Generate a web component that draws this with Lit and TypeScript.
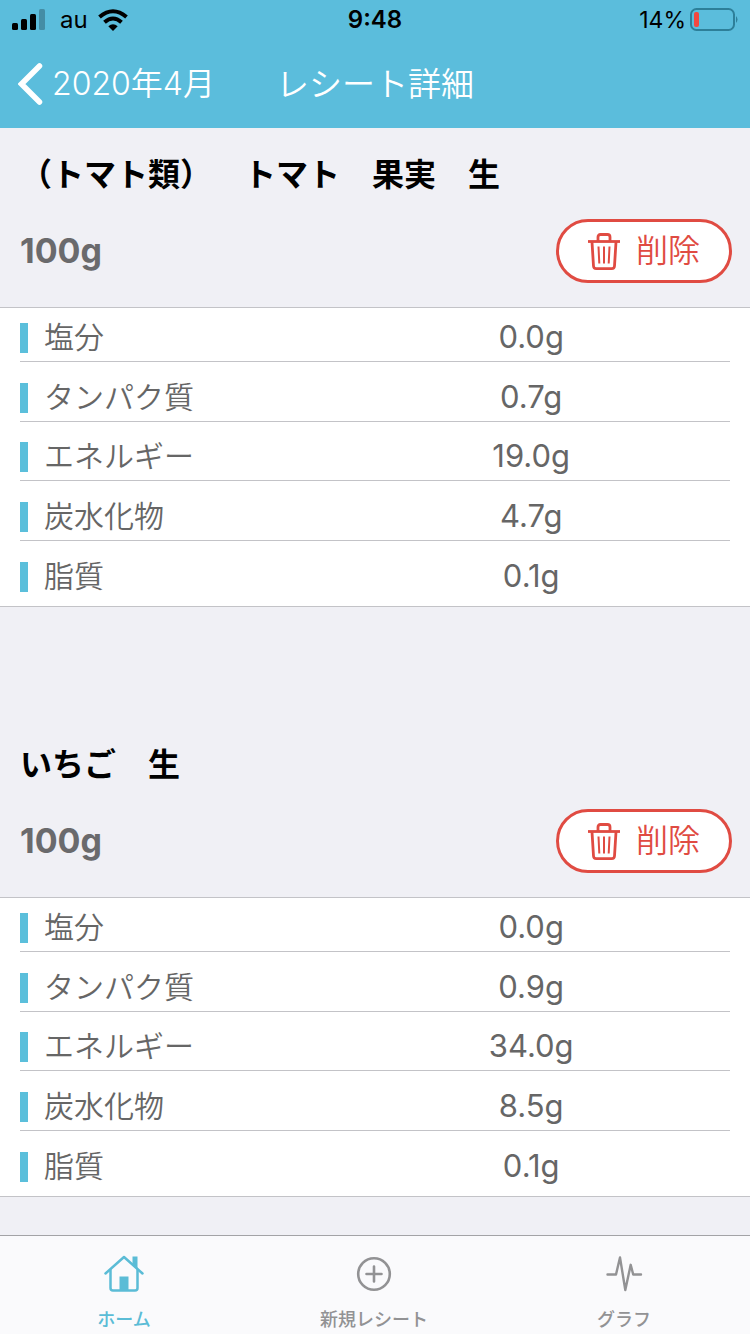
import { LitElement, html, svg, css } from "lit";
import { customElement, property, state } from "lit/decorators.js";
import { classMap } from "lit/directives/class-map.js";

interface Nutrient {
  label: string;
  value: string;
}

interface Food {
  name: string;
  amount: string;
  nutrients: Nutrient[];
}

const nutrients = (...values: string[]): Nutrient[] =>
  ["塩分", "タンパク質", "エネルギー", "炭水化物", "脂質"].map((label, i) => ({ label, value: values[i] }));

const FOODS: Food[] = [
  { name: "（トマト類）　トマト　果実　生", amount: "100g", nutrients: nutrients("0.0g", "0.7g", "19.0g", "4.7g", "0.1g") },
  { name: "いちご　生", amount: "100g", nutrients: nutrients("0.0g", "0.9g", "34.0g", "8.5g", "0.1g") },
];

const TABS = [
  {
    id: "home",
    label: "ホーム",
    icon: svg`<path d="M1.500 18.500 20 2l18.500 16.500" stroke-width="2.500"/><path d="M6.500 15v18q0 2.500 2.500 2.500h22q2.500 0 2.500-2.500V15" stroke-width="2.500"/><path d="M28.500 1.500H33.500v13l-5-4.500Z" fill="currentColor" stroke="none"/><path d="M15.500 21.500h9V36h-9Z" fill="currentColor" stroke="none"/>`,
  },
  {
    id: "new",
    label: "新規レシート",
    icon: svg`<circle cx="20" cy="19" r="15.800" stroke-width="2.600"/><path d="M20 11.500v15M12.500 19h15" stroke-width="2.600"/>`,
  },
  {
    id: "graph",
    label: "グラフ",
    icon: svg`<path d="M3.500 19.500h8.500L16 2.500l5.300 32.500 5.400-25.200 2.500 9.700h7.800" stroke-width="2.400"/>`,
  },
];

@customElement("status-bar")
class StatusBar extends LitElement {
  static styles = css`
    :host {
      display: grid;
      grid-template-columns: 1fr auto 1fr;
      align-items: center;
      height: 40px;
      padding: 0 12px;
      color: #000;
      font-size: 23px;
      line-height: 28px;
    }
    .side { display: flex; align-items: center; }
    .signal { margin-right: 15px; }
    .carrier { margin-right: 10px; font-size: 24px; }
    .time { font-weight: 600; font-size: 24px; }
    .power { justify-content: flex-end; gap: 4px; }
    svg { display: block; flex: none; }
  `;

  render() {
    return html`
      <div class="side">
        <svg class="signal" width="33" height="22" viewBox="0 0 33 22" aria-hidden="true">
          <rect x="0" y="14" width="6" height="7" rx="1.500" />
          <rect x="9" y="10" width="6" height="11" rx="1.500" />
          <rect x="18" y="5" width="6" height="16" rx="1.500" />
          <rect x="27" y="0" width="6" height="21" rx="1.500" opacity=".25" />
        </svg>
        <span class="carrier">au</span>
        <svg width="30" height="22" viewBox="0 0 30 22" aria-hidden="true">
          <g fill="none" stroke="#000" stroke-width="4">
            <path d="M1.500 8Q15-3.500 28.500 8" />
            <path d="M6.500 13.200q8.500-7.400 17 0" />
          </g>
          <path d="M15 22l-4.700-4.800q4.700-3.700 9.400 0Z" />
        </svg>
      </div>
      <time class="time">9:48</time>
      <div class="side power">
        <span>14%</span>
        <svg width="48" height="24" viewBox="0 0 48 24" aria-hidden="true">
          <rect x="1" y="1" width="43" height="21" rx="5.500" fill="none" stroke="#2d7f99" stroke-width="2" />
          <path d="M46 8q3 3.500 0 7Z" fill="#2d7f99" />
          <rect x="4" y="4" width="5" height="15" rx="2" fill="#f4473f" />
        </svg>
      </div>
    `;
  }
}

@customElement("food-section")
class FoodSection extends LitElement {
  @property({ attribute: false }) food!: Food;

  static styles = css`
    :host { display: block; }
    .head {
      display: flex;
      flex-direction: column;
      gap: 20px;
      padding: 22px 18px 24px 20px;
    }
    .name {
      margin: 0;
      color: #000;
      font-size: 32px;
      line-height: 49px;
      font-weight: 600;
      text-spacing-trim: space-all;
    }
    .line { display: flex; align-items: center; justify-content: space-between; }
    .amount { color: #6a6a6c; font-size: 34px; line-height: 40px; font-weight: 700; }
    .delete {
      display: flex;
      align-items: center;
      justify-content: center;
      gap: 16px;
      width: 176px;
      height: 64px;
      padding: 0;
      border: 3px solid #e04b42;
      border-radius: 32px;
      background: #fff;
      color: #e04b42;
      font: inherit;
      font-size: 32px;
      line-height: 40px;
      font-weight: 350;
      cursor: pointer;
    }
    .delete svg { display: block; fill: none; stroke: currentColor; }
    .panel {
      padding: 0 20px;
      background: #fff;
      border-top: 1px solid #c3c3c7;
      border-bottom: 1px solid #c3c3c7;
    }
    .facts {
      width: 100%;
      border-collapse: separate;
      border-spacing: 0;
      table-layout: fixed;
      color: #666;
      font-size: 30px;
      line-height: 28px;
    }
    .label, .value {
      height: 30px;
      padding: 21px 0 8px;
      border-bottom: 1px solid #c3c3c7;
      font-weight: 350;
      vertical-align: top;
      white-space: nowrap;
    }
    .label { width: 44%; text-align: left; }
    .value { text-align: center; font-size: 31px; font-weight: 400; }
    .row:first-child > * { padding-top: 15px; }
    .row:nth-child(3) > * { padding-top: 20px; }
    .row:last-child > * { padding-bottom: 14px; border-bottom: 0; }
    .mark { display: flex; gap: 16px; }
    .mark::before { content: ""; width: 8px; height: 30px; background: #5bbfdb; }
  `;

  render() {
    const { name, amount, nutrients } = this.food;
    return html`
      <header class="head">
        <h2 class="name">${name}</h2>
        <div class="line">
          <span class="amount">${amount}</span>
          <button class="delete" type="button">
            <svg width="32" height="38" viewBox="0 0 32 38" stroke-width="2.800" aria-hidden="true">
              <path d="M0 9.500h32" />
              <path d="M10 9V5q0-2.500 2.500-2.500h7Q22 2.500 22 5v4" />
              <path d="M4 10l1.500 24q.2 2.600 2.700 2.600h15.600q2.500 0 2.700-2.600L28 10" />
              <path d="M10.500 14.500l.8 17M16 14.500v17M21.500 14.500l-.8 17" stroke-width="2" />
            </svg>
            <span>削除</span>
          </button>
        </div>
      </header>
      <div class="panel">
        <table class="facts">
          <tbody>
            ${nutrients.map(
              (n) => html`<tr class="row">
                <th class="label" scope="row"><span class="mark">${n.label}</span></th>
                <td class="value">${n.value}</td>
              </tr>`
            )}
          </tbody>
        </table>
      </div>
    `;
  }
}

@customElement("app-root")
class AppRoot extends LitElement {
  @state() private tab = "home";

  static styles = css`
    :host {
      display: flex;
      flex-direction: column;
      min-height: 100vh;
      background: #f0f0f5;
      font-family: Inter, "Noto Sans CJK JP", sans-serif;
    }
    .top { background: #5bbddc; }
    .nav {
      display: grid;
      grid-template-columns: 1fr auto 1fr;
      align-items: center;
      height: 88px;
      padding: 0 18px;
      color: #fff;
      font-weight: 350;
    }
    .back {
      display: flex;
      align-items: center;
      gap: 9px;
      color: inherit;
      font-size: 32px;
      line-height: 42px;
      text-decoration: none;
      white-space: nowrap;
    }
    .title { margin: 0; font-size: 33px; line-height: 42px; font-weight: 350; }
    .content { display: flex; flex: 1; flex-direction: column; gap: 111px; }
    .tabs {
      position: sticky;
      bottom: 0;
      display: grid;
      grid-template-columns: repeat(3, 1fr);
      height: 98px;
      background: #fafafc;
      border-top: 1px solid #a3a3a6;
    }
    .tab {
      display: flex;
      flex-direction: column;
      align-items: center;
      gap: 14px;
      padding: 19px 2px 0 0;
      border: 0;
      background: none;
      color: #929294;
      font: inherit;
      font-size: 18px;
      line-height: 26px;
      font-weight: 500;
      cursor: pointer;
    }
    .active { color: #5bbcd6; }
    .icon { display: block; fill: none; stroke: currentColor; stroke-linejoin: round; stroke-linecap: round; }
  `;

  render() {
    return html`
      <header class="top">
        <status-bar></status-bar>
        <nav class="nav">
          <a class="back" href="#">
            <svg width="25" height="42" viewBox="0 0 25 42" fill="none" stroke="currentColor" stroke-width="5.500" stroke-linecap="round" aria-hidden="true">
              <path d="M21.500 3 3.500 21l18 18" />
            </svg>
            <span>2020年4月</span>
          </a>
          <h1 class="title">レシート詳細</h1>
        </nav>
      </header>
      <main class="content">${FOODS.map((food) => html`<food-section .food=${food}></food-section>`)}</main>
      <nav class="tabs">
        ${TABS.map(
          (t) => html`<button
            type="button"
            class=${classMap({ tab: true, active: t.id === this.tab })}
            @click=${() => (this.tab = t.id)}
          >
            <svg class="icon" width="40" height="38" viewBox="0 0 40 38" aria-hidden="true">${t.icon}</svg>
            <span>${t.label}</span>
          </button>`
        )}
      </nav>
    `;
  }
}
